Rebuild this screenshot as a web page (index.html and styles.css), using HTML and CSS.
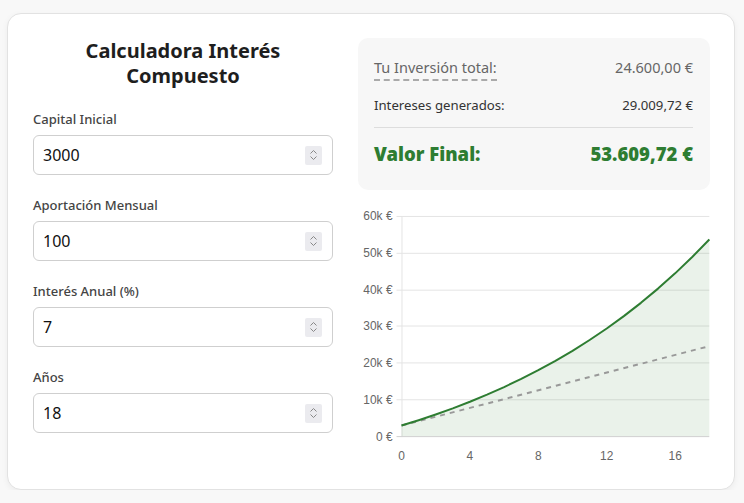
FILE: index.html
```html
<!DOCTYPE html>
<html lang="es">
<head>
<meta charset="utf-8">
<title>Calculadora Interés Compuesto</title>
<link rel="stylesheet" href="styles.css">
</head>
<body>
<div class="card">
  <div class="form-col">
    <h1 class="title">Calculadora Interés Compuesto</h1>
    <div class="field">
      <label class="label">Capital Inicial</label>
      <div class="input-box"><input class="input" type="text" value="3000"><span class="spin"><svg width="9" height="12" viewBox="0 0 9 12"><path d="M1.5 4.5 L4.5 1.5 L7.5 4.5 M1.5 7.5 L4.5 10.5 L7.5 7.5" fill="none" stroke="#888" stroke-width="1"/></svg></span></div>
    </div>
    <div class="field">
      <label class="label">Aportación Mensual</label>
      <div class="input-box"><input class="input" type="text" value="100"><span class="spin"><svg width="9" height="12" viewBox="0 0 9 12"><path d="M1.5 4.5 L4.5 1.5 L7.5 4.5 M1.5 7.5 L4.5 10.5 L7.5 7.5" fill="none" stroke="#888" stroke-width="1"/></svg></span></div>
    </div>
    <div class="field">
      <label class="label">Interés Anual (%)</label>
      <div class="input-box"><input class="input" type="text" value="7"><span class="spin"><svg width="9" height="12" viewBox="0 0 9 12"><path d="M1.5 4.5 L4.5 1.5 L7.5 4.5 M1.5 7.5 L4.5 10.5 L7.5 7.5" fill="none" stroke="#888" stroke-width="1"/></svg></span></div>
    </div>
    <div class="field">
      <label class="label">Años</label>
      <div class="input-box"><input class="input" type="text" value="18"><span class="spin"><svg width="9" height="12" viewBox="0 0 9 12"><path d="M1.5 4.5 L4.5 1.5 L7.5 4.5 M1.5 7.5 L4.5 10.5 L7.5 7.5" fill="none" stroke="#888" stroke-width="1"/></svg></span></div>
    </div>
  </div>
  <div class="result-col">
    <div class="summary">
      <div class="row row-invest"><span class="dashed">Tu Inversión total:</span><span>24.600,00 €</span></div>
      <div class="row row-interest"><span>Intereses generados:</span><span>29.009,72 €</span></div>
      <div class="row row-final"><span>Valor Final:</span><span>53.609,72 €</span></div>
    </div>
    <svg class="chart" width="352" height="260" viewBox="0 0 352 260">
      <g stroke="#e4e4e4" stroke-width="1">
        <line x1="38" y1="10.5" x2="352" y2="10.5"/>
        <line x1="38" y1="47.5" x2="352" y2="47.5"/>
        <line x1="38" y1="84.5" x2="352" y2="84.5"/>
        <line x1="38" y1="120.5" x2="352" y2="120.5"/>
        <line x1="38" y1="157.5" x2="352" y2="157.5"/>
        <line x1="38" y1="194.5" x2="352" y2="194.5"/>
        <line x1="43.5" y1="10" x2="43.5" y2="232"/>
      </g>
      <line x1="38" y1="231.5" x2="352" y2="231.5" stroke="#cfcfcf" stroke-width="1"/>
      <path d="M43 220.42 L60.17 215.05 L77.33 209.28 L94.5 203.1 L111.67 196.48 L128.83 189.37 L146 181.75 L163.17 173.58 L180.33 164.82 L197.5 155.42 L214.67 145.35 L231.83 134.54 L249 122.96 L266.17 110.54 L283.33 97.22 L300.5 82.93 L317.67 67.62 L334.83 51.2 L352 33.58 L352 231 L43 231 Z" fill="#2e7d32" fill-opacity="0.1"/>
      <path d="M43 220.42 L352 140.68" fill="none" stroke="#999" stroke-width="2" stroke-dasharray="5 5"/>
      <path d="M43 220.42 L60.17 215.05 L77.33 209.28 L94.5 203.1 L111.67 196.48 L128.83 189.37 L146 181.75 L163.17 173.58 L180.33 164.82 L197.5 155.42 L214.67 145.35 L231.83 134.54 L249 122.96 L266.17 110.54 L283.33 97.22 L300.5 82.93 L317.67 67.62 L334.83 51.2 L352 33.58" fill="none" stroke="#2e7d32" stroke-width="2" stroke-linejoin="round"/>
      <g class="axis" text-anchor="end">
        <text x="34" y="14.5">60k €</text>
        <text x="34" y="51.5">50k €</text>
        <text x="34" y="88.5">40k €</text>
        <text x="34" y="124.5">30k €</text>
        <text x="34" y="161.5">20k €</text>
        <text x="34" y="198.5">10k €</text>
        <text x="34" y="235.5">0 €</text>
      </g>
      <g class="axis" text-anchor="middle">
        <text x="43" y="255">0</text>
        <text x="111.7" y="255">4</text>
        <text x="180.3" y="255">8</text>
        <text x="249" y="255">12</text>
        <text x="317.7" y="255">16</text>
      </g>
    </svg>
  </div>
</div>
</body>
</html>
```

FILE: styles.css
```css
* { box-sizing: border-box; }

html, body {
  margin: 0;
  padding: 0;
  background: #f8f8f8;
}

body {
  padding: 13px 9px 0 7px;
  font-family: "Noto Sans", "Open Sans", sans-serif;
  color: #333;
}

.card {
  display: flex;
  gap: 25px;
  width: 728px;
  height: 477px;
  padding: 24px 24px 24px 25px;
  background: #fff;
  border: 1px solid #e2e2e2;
  border-radius: 14px;
  box-shadow: 0 2px 6px rgba(0, 0, 0, 0.05);
}

.form-col {
  width: 300px;
  flex: none;
  display: flex;
  flex-direction: column;
}

.title {
  margin: 0 0 21px;
  font-size: 20px;
  line-height: 25px;
  font-weight: 700;
  text-align: center;
  color: #1e1e1e;
}

.field {
  display: flex;
  flex-direction: column;
  margin-bottom: 20px;
}

.label {
  font-size: 13px;
  line-height: 20px;
  font-weight: 500;
  color: #444;
  margin-bottom: 6px;
}

.input-box {
  display: flex;
  align-items: center;
  height: 40px;
  border: 1px solid #cfcfcf;
  border-radius: 6px;
  padding: 0 10px 0 9px;
  background: #fff;
}

.input {
  flex: 1;
  min-width: 0;
  border: 0;
  outline: none;
  padding: 0;
  font-family: "Noto Sans", "Open Sans", sans-serif;
  font-size: 16px;
  color: #111;
  background: transparent;
}

.spin {
  display: flex;
  align-items: center;
  justify-content: center;
  width: 17px;
  height: 19px;
  background: #ebebef;
  border-radius: 2px;
}

.result-col {
  width: 352px;
  flex: none;
  display: flex;
  flex-direction: column;
}

.summary {
  background: #f7f7f7;
  border-radius: 10px;
  padding: 18px 17px 24px 16px;
}

.row {
  display: flex;
  justify-content: space-between;
  align-items: baseline;
}

.row-invest {
  font-size: 14.5px;
  line-height: 22px;
  color: #666;
}

.dashed {
  border-bottom: 2px dashed #aaa;
  padding-bottom: 1px;
}

.row-interest {
  margin-top: 14px;
  font-size: 13.2px;
  line-height: 20px;
  color: #333;
  padding-bottom: 12px;
  border-bottom: 1px solid #dddddd;
}

.row-final {
  margin-top: 14px;
  font-size: 18.5px;
  line-height: 24px;
  font-weight: 900;
  color: #2e7d32;
}

.chart {
  display: block;
  margin-top: 16px;
}

.axis {
  font-family: "Liberation Sans", Arial, sans-serif;
  font-size: 12px;
  fill: #666;
}
```
